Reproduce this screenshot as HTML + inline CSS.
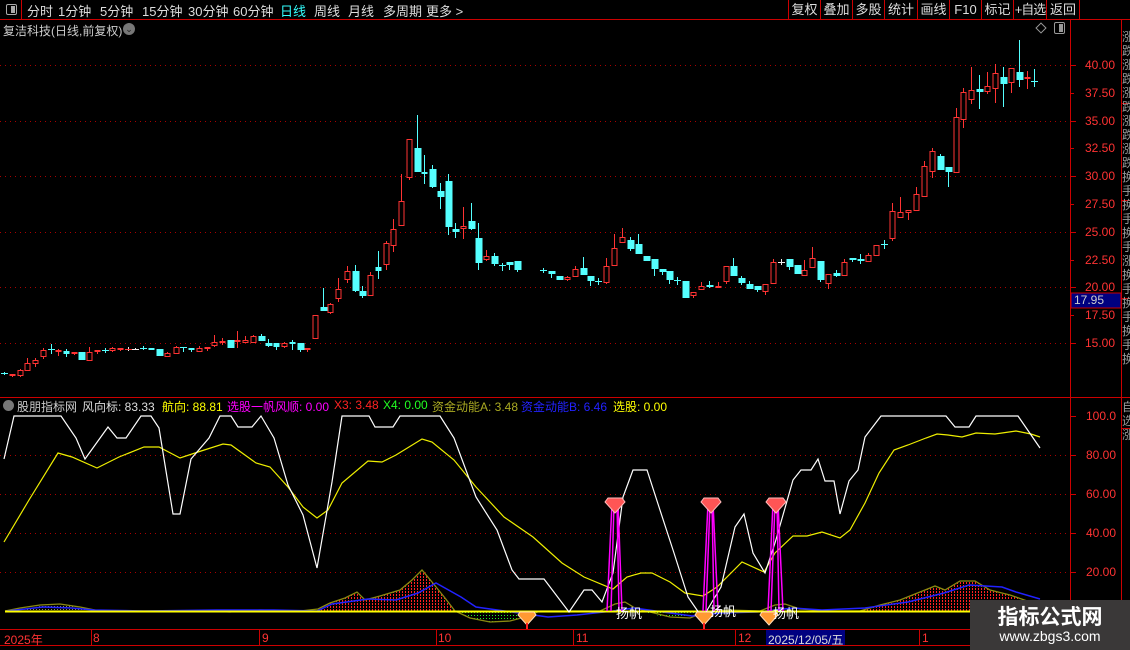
<!DOCTYPE html>
<html><head><meta charset="utf-8">
<style>
*{margin:0;padding:0;box-sizing:border-box}
body{width:1130px;height:650px;background:#000;overflow:hidden;position:relative;font-family:"Liberation Sans","Noto Sans CJK SC",sans-serif;color:#ccc}
.a{position:absolute;white-space:nowrap}
.tb{font-size:13px;top:1px;color:#ddd}
.btn{position:absolute;top:0;height:19px;border-left:1px solid #c00;font-size:13px;color:#ddd;text-align:center;line-height:19px;white-space:nowrap;overflow:hidden}
.pl{position:absolute;left:1085px;font-size:12px;color:#f33;font-family:"Liberation Sans",sans-serif}
.il{position:absolute;left:1086px;font-size:12px;color:#f33}
.hd{font-size:12px;top:398px}
</style></head><body>
<div class="a" style="left:0;top:0;width:1130px;height:20px;border-bottom:1px solid #c00"></div>
<div class="a" style="left:0;top:0;width:22px;height:19px;border-right:1px solid #c00"></div>
<div class="a" style="left:6px;top:4px;width:11px;height:11px;border:1px solid #aaa;border-radius:2px"><div style="position:absolute;right:1px;top:1px;width:4px;height:7px;background:#aaa"></div></div>
<div class="a tb" style="left:27px">分时</div>
<div class="a tb" style="left:58px">1分钟</div>
<div class="a tb" style="left:100px">5分钟</div>
<div class="a tb" style="left:142px">15分钟</div>
<div class="a tb" style="left:188px">30分钟</div>
<div class="a tb" style="left:233px">60分钟</div>
<div class="a tb" style="left:280px;color:#3ff">日线</div>
<div class="a tb" style="left:314px">周线</div>
<div class="a tb" style="left:348px">月线</div>
<div class="a tb" style="left:383px">多周期</div>
<div class="a tb" style="left:426px">更多 &gt;</div>
<div class="btn" style="left:788px;width:32px">复权</div>
<div class="btn" style="left:820px;width:32px">叠加</div>
<div class="btn" style="left:852px;width:32px">多股</div>
<div class="btn" style="left:884px;width:33px">统计</div>
<div class="btn" style="left:917px;width:32px">画线</div>
<div class="btn" style="left:949px;width:32px">F10</div>
<div class="btn" style="left:981px;width:32px">标记</div>
<div class="btn" style="left:1013px;width:33px;letter-spacing:-1px">+自选</div>
<div class="btn" style="left:1046px;width:33px">返回</div>
<div class="btn" style="left:1079px;width:51px"></div>
<div class="a" style="left:3px;top:22px;font-size:12px;color:#ccc">复洁科技(日线,前复权)</div>
<div class="a" style="left:123px;top:23px;width:12px;height:12px;border-radius:6px;background:#777;color:#222;font-size:9px;line-height:12px;text-align:center">⌄</div>
<div class="a" style="left:1037px;top:24px;width:8px;height:8px;border:1px solid #999;transform:rotate(45deg)"></div>
<div class="a" style="left:1054px;top:22px;width:11px;height:12px;border:1px solid #999;border-radius:2px"><div style="position:absolute;right:1px;top:1px;width:4px;height:8px;background:#999"></div></div>

<svg class="a" style="left:0;top:0" width="1130" height="650" viewBox="0 0 1130 650">
<defs>
<pattern id="rd" width="3" height="3" patternUnits="userSpaceOnUse"><rect width="1" height="2" fill="#f22"/></pattern>
<pattern id="gd" width="3" height="3" patternUnits="userSpaceOnUse"><rect width="1" height="1" fill="#2e2"/></pattern>
<pattern id="od" width="3" height="3" patternUnits="userSpaceOnUse"><rect width="1" height="1" fill="#886"/></pattern>
</defs>
<path d="M1070.5 20V645M1121.5 20V645M0 397.5H1130M0 629.5H1130M0 645.5H1130" stroke="#c00" fill="none"/>
<g stroke="#a00" stroke-dasharray="1 4" fill="none">
<path d="M0 65.5H1068M0 121.5H1068M0 176.5H1068M0 232.5H1068M0 287.5H1068M0 343.5H1068"/>
<path d="M0 455.5H1068M0 494.5H1068M0 533.5H1068M0 572.5H1068"/>
</g>
<g stroke="#c00"><path d="M1070 65.5h6M1070 93.5h4M1070 121.5h6M1070 148.5h4M1070 176.5h6M1070 204.5h4M1070 232.5h6M1070 260.5h4M1070 287.5h6M1070 315.5h4M1070 343.5h6M1070 416.5h6M1070 455.5h6M1070 494.5h6M1070 533.5h6M1070 572.5h6"/></g>
<path d="M1121 103.5H1130M1121 200.5H1130M1121 298.5H1130M1121 428.5H1130" stroke="#c00"/>

<g stroke-width="1" shape-rendering="crispEdges">
<path stroke="#f33" d="M12.5 374V377M20.5 369V377M27.5 358V371M35.5 358V367M43.5 348V359M58.5 349V356M74.5 352V355M89.5 347V361M97.5 350V354M112.5 347V352M120.5 348V351M167.5 352V357M176.5 346V354M199.5 346V352M207.5 347V351M214.5 335V347M222.5 338V345M237.5 331V348M245.5 336V343M253.5 335V343M284.5 342V348M307.5 348V352M315.5 315V339M330.5 303V314M338.5 278V302M347.5 266V283M370.5 272V296M386.5 241V270M393.5 219V252M401.5 174V226M409.5 139V180M463.5 207V239M486.5 250V261
M567.5 276V281M575.5 266V277M606.5 258V284M614.5 234V266M622.5 228V243M693.5 292V298M701.5 282V290M718.5 282V288M726.5 266V284M765.5 284V295M773.5 259V284M804.5 260V276M812.5 247V268M828.5 274V289M844.5 259V276M868.5 253V262M876.5 245V256M892.5 203V241M900.5 197V218M908.5 210V220M916.5 187V211M924.5 161V197M932.5 148V178M956.5 108V173M963.5 88V128M971.5 67V104M987.5 72V94M995.5 64V103M1011.5 68V93M1027.5 71V89"/>
<path stroke="#5ff" d="M4.5 372V375M51.5 344V354M66.5 349V357M81.5 352V360M105.5 348V353M143.5 346V350M151.5 348V350M159.5 349V356M183.5 347V352M191.5 348V352M230.5 340V348M261.5 334V341M268.5 339V347M276.5 343V350M292.5 340V350M300.5 343V352M323.5 288V311M355.5 265V292M362.5 286V298M378.5 251V279M417.5 115V172M424.5 155V184M432.5 165V188M440.5 183V209M448.5 174V235M455.5 223V238M471.5 203V230M478.5 223V270M494.5 253V266M502.5 263V271M509.5 262V270M517.5 261V272
M543.5 268V273M551.5 271V278M559.5 276V280M583.5 257V275M590.5 276V286M598.5 278V285M630.5 237V251M638.5 234V254M646.5 256V261M654.5 259V276M662.5 269V275M669.5 271V284M677.5 277V285M685.5 281V298M709.5 281V288M733.5 258V276M741.5 276V285M749.5 281V289M757.5 286V292M789.5 259V270M797.5 265V274M820.5 261V282M836.5 270V277M852.5 258V262M860.5 254V264M884.5 240V249M940.5 154V170M948.5 167V187M979.5 75V109M1003.5 67V107M1019.5 40V87M1034.5 69V87"/>
<path stroke="#eee" d="M128.5 347V351M135.5 348V350M781.5 259V265"/>
<path stroke="#f33" d="M125 349.5h7"/>
<path stroke="#eee" d="M132 349.5h7M778 262.5h7"/>
<path stroke="#5ff" d="M1 373.5h7M48 349.5h7M102 350.5h7M140 348.5h7M180 347.5h7M499 265.5h7M540 270.5h7M595 281.5h7M674 280.5h7M881 244.5h7M1031 81.5h7"/>
<g fill="#f33">
<rect x="9.5" y="374" width="6" height="2"/><rect x="55.5" y="350" width="6" height="2"/><rect x="71.5" y="352" width="6" height="2"/><rect x="94.5" y="350" width="6" height="2"/><rect x="117.5" y="348" width="6" height="2"/><rect x="204.5" y="347" width="6" height="2"/><rect x="219.5" y="341" width="6" height="2"/><rect x="234.5" y="340" width="6" height="2"/><rect x="304.5" y="348" width="6" height="2"/><rect x="715.5" y="286" width="6" height="2"/><rect x="1024.5" y="77" width="6" height="2"/>
</g>
<g fill="#000" stroke="#f33">
<rect x="18" y="370.5" width="5" height="5"/><rect x="25" y="363.5" width="5" height="7"/><rect x="33" y="360.5" width="5" height="3"/><rect x="41" y="350.5" width="5" height="6"/><rect x="87" y="352.5" width="5" height="8"/><rect x="110" y="348.5" width="5" height="2"/><rect x="165" y="353.5" width="5" height="3"/><rect x="174" y="347.5" width="5" height="6"/><rect x="197" y="348.5" width="5" height="3"/><rect x="212" y="342.5" width="5" height="3"/><rect x="243" y="340.5" width="5" height="2"/><rect x="251" y="336.5" width="5" height="6"/><rect x="282" y="343.5" width="5" height="3"/><rect x="313" y="315.5" width="5" height="23"/><rect x="328" y="304.5" width="5" height="8"/><rect x="336" y="289.5" width="5" height="9"/><rect x="345" y="271.5" width="5" height="8"/><rect x="368" y="275.5" width="5" height="20"/><rect x="384" y="243.5" width="5" height="21"/><rect x="391" y="229.5" width="5" height="16"/><rect x="399" y="201.5" width="5" height="24"/><rect x="407" y="139.5" width="5" height="38"/><rect x="461" y="226.5" width="5" height="2"/><rect x="484" y="256.5" width="5" height="3"/>
<rect x="565" y="277.5" width="5" height="2"/><rect x="573" y="269.5" width="5" height="7"/><rect x="604" y="266.5" width="5" height="16"/><rect x="612" y="248.5" width="5" height="17"/><rect x="620" y="237.5" width="5" height="5"/><rect x="691" y="292.5" width="5" height="3"/><rect x="699" y="286.5" width="5" height="3"/><rect x="724" y="266.5" width="5" height="15"/><rect x="763" y="284.5" width="5" height="7"/><rect x="771" y="262.5" width="5" height="21"/><rect x="802" y="270.5" width="5" height="5"/><rect x="810" y="258.5" width="5" height="9"/><rect x="826" y="274.5" width="5" height="9"/><rect x="842" y="262.5" width="5" height="13"/><rect x="866" y="255.5" width="5" height="6"/><rect x="874" y="245.5" width="5" height="10"/><rect x="890" y="211.5" width="5" height="27"/><rect x="898" y="212.5" width="5" height="5"/><rect x="906" y="210.5" width="5" height="2"/><rect x="914" y="194.5" width="5" height="16"/><rect x="922" y="166.5" width="5" height="30"/><rect x="930" y="151.5" width="5" height="20"/><rect x="954" y="117.5" width="5" height="55"/><rect x="961" y="92.5" width="5" height="27"/><rect x="969" y="90.5" width="5" height="9"/><rect x="985" y="86.5" width="5" height="5"/><rect x="993" y="73.5" width="5" height="15"/><rect x="1009" y="68.5" width="5" height="14"/>
</g>
<g fill="#5ff">
<rect x="63.5" y="351" width="6" height="3"/><rect x="78.5" y="352" width="7" height="8"/><rect x="148.5" y="348" width="6" height="2"/><rect x="156.5" y="349" width="7" height="7"/><rect x="188.5" y="348" width="6" height="2"/><rect x="227.5" y="340" width="7" height="8"/><rect x="258.5" y="336" width="7" height="5"/><rect x="265.5" y="343" width="7" height="3"/><rect x="273.5" y="343" width="6" height="4"/><rect x="289.5" y="342" width="6" height="2"/><rect x="297.5" y="343" width="7" height="7"/><rect x="320.5" y="307" width="7" height="4"/><rect x="352.5" y="271" width="7" height="20"/><rect x="359.5" y="291" width="7" height="5"/><rect x="375.5" y="267" width="6" height="4"/><rect x="414.5" y="148" width="7" height="24"/><rect x="421.5" y="172" width="6" height="2"/><rect x="429.5" y="169" width="7" height="18"/><rect x="437.5" y="191" width="7" height="6"/><rect x="445.5" y="181" width="7" height="46"/><rect x="452.5" y="229" width="7" height="3"/><rect x="468.5" y="221" width="7" height="8"/><rect x="475.5" y="238" width="7" height="25"/><rect x="491.5" y="256" width="7" height="8"/><rect x="506.5" y="262" width="7" height="3"/><rect x="514.5" y="261" width="7" height="9"/>
<rect x="548.5" y="271" width="7" height="3"/><rect x="556.5" y="276" width="7" height="4"/><rect x="580.5" y="268" width="7" height="7"/><rect x="587.5" y="276" width="7" height="5"/><rect x="627.5" y="240" width="7" height="9"/><rect x="635.5" y="244" width="7" height="10"/><rect x="643.5" y="256" width="7" height="5"/><rect x="651.5" y="259" width="7" height="10"/><rect x="659.5" y="269" width="7" height="3"/><rect x="666.5" y="271" width="7" height="9"/><rect x="682.5" y="281" width="7" height="17"/><rect x="706.5" y="285" width="7" height="2"/><rect x="730.5" y="266" width="7" height="10"/><rect x="738.5" y="278" width="7" height="5"/><rect x="746.5" y="284" width="7" height="5"/><rect x="754.5" y="286" width="7" height="4"/><rect x="786.5" y="259" width="7" height="8"/><rect x="794.5" y="265" width="7" height="9"/><rect x="817.5" y="261" width="7" height="19"/><rect x="833.5" y="273" width="7" height="3"/><rect x="849.5" y="258" width="7" height="2"/><rect x="857.5" y="259" width="7" height="2"/><rect x="937.5" y="156" width="7" height="14"/><rect x="945.5" y="167" width="7" height="5"/><rect x="976.5" y="89" width="7" height="3"/><rect x="1000.5" y="77" width="7" height="7"/><rect x="1016.5" y="72" width="7" height="8"/>
</g>
</g>

<rect x="1071" y="293" width="50" height="15" fill="#000080" stroke="#c00"/>

<polygon fill="url(#rd)" points="318,611 330,603 345,598 357,592 365,600 380,596 400,590 412,580 422,570 432,582 445,598 455,611"/>
<polygon fill="url(#rd)" points="860,611 880,605 900,600 920,592 935,586 945,590 960,581 975,581 990,590 1010,595 1030,602 1040,611"/>
<polygon fill="url(#od)" points="20,611 40,606 60,604 80,607 100,611"/>
<polygon fill="url(#gd)" points="455,611 470,618 490,622 510,621 525,617 540,611"/>
<polygon fill="url(#gd)" points="640,611 660,616 690,618 700,614 706,611"/>
<polyline fill="none" stroke="#8a8a10" stroke-width="1.3" points="5,611 20,608 40,605 60,604 80,607 100,611 150,611 200,611 230,612 260,610 300,611 318,609 330,603 345,598 357,592 365,600 380,596 400,590 412,580 422,570 432,582 445,598 455,611 470,618 490,622 510,621 525,617 540,611 560,611 600,611 615,604 625,602 635,608 650,612 670,617 690,618 700,614 712,611 730,610 760,611 775,605 785,604 800,609 830,611 860,611 880,605 900,600 920,592 935,586 945,590 960,581 975,581 990,590 1010,595 1030,602 1040,607"/>
<polyline fill="none" stroke="#22f" stroke-width="1.5" points="7,611 43,607 72,608 94,610 144,611 216,610 274,610 317,611 332,604 368,599 396,600 418,593 436,583 461,597 476,607 519,613 548,617 577,615 613,611 634,608 663,612 692,616 721,613 757,612 793,608 822,610 865,608 908,602 944,593 969,585 1002,587 1016,592 1040,599"/>
<path d="M5 611.5H1068" stroke="#ff0" stroke-width="2"/>
<polyline fill="none" stroke="#ee0" stroke-width="1.2" points="4,542 29,500 58,453 72,457 97,468 119,457 144,447 159,447 180,458 198,452 223,444 231,445 256,463 270,467 288,487 303,507 317,518 328,510 342,483 368,461 382,462 396,455 422,439 432,442 454,460 476,487 504,517 533,537 562,563 584,577 613,589 627,577 641,573 652,573 670,582 685,593 703,596 717,587 742,562 764,572 775,553 793,536 807,536 822,532 840,538 850,530 865,503 879,473 894,450 908,445 926,438 937,434 948,435 962,437 976,433 995,434 1016,431 1031,434 1040,437"/>
<polyline fill="none" stroke="#fff" stroke-width="1.2" points="4,459 14,416 61,416 76,438 85,459 108,427 117,438 126,438 141,416 151,416 159,428 173,514 180,514 191,459 209,438 220,416 231,416 238,427 252,427 261,416 274,438 288,485 303,515 317,568 332,482 342,416 369,416 375,427 393,427 400,416 440,416 454,438 476,497 497,530 512,570 519,579 544,579 569,612 584,590 592,590 602,602 613,573 623,497 633,470 647,470 659,507 674,553 688,597 699,613 706,612 721,587 735,527 744,514 753,553 765,573 775,543 793,480 801,470 811,470 818,459 825,481 834,481 840,514 849,481 858,470 865,437 881,416 946,416 955,427 969,427 976,416 1018,416 1029,432 1040,448"/>
<g stroke="#f0f" stroke-width="1.5" fill="none">
<path d="M607 611L612 503M611 611L614 503M617 503L619 611M618 503L622 611"/>
<path d="M703 611L708 503M706 611L710 503M712 503L714 611M713 503L718 611"/>
<path d="M768 611L773 503M771 611L775 503M777 503L779 611M778 503L783 611"/>
</g>
<g>
<path d="M608 498h14l3 4-10 11-10-11z" fill="#f55" stroke="#fbb"/>
<path d="M704 498h14l3 4-10 11-10-11z" fill="#f55" stroke="#fbb"/>
<path d="M769 498h14l3 4-10 11-10-11z" fill="#f55" stroke="#fbb"/>
<path d="M520 612h14l2 3-9 10-9-10z" fill="#f93" stroke="#fdb"/>
<path d="M697 612h14l2 3-9 10-9-10z" fill="#f93" stroke="#fdb"/>
<path d="M762 612h14l2 3-9 10-9-10z" fill="#f93" stroke="#fdb"/>
<path d="M527 623v6M704 623v6" stroke="#f22" stroke-width="2"/>
</g>
<path d="M91.5 630V645M259.5 630V645M436.5 630V645M573.5 630V645M735.5 630V645M919.5 630V645" stroke="#c00"/>
<rect x="766" y="630" width="79" height="15" fill="#000080"/>
</svg>

<div class="pl" style="top:58px">40.00</div>
<div class="pl" style="top:86px">37.50</div>
<div class="pl" style="top:114px">35.00</div>
<div class="pl" style="top:141px">32.50</div>
<div class="pl" style="top:169px">30.00</div>
<div class="pl" style="top:197px">27.50</div>
<div class="pl" style="top:225px">25.00</div>
<div class="pl" style="top:253px">22.50</div>
<div class="pl" style="top:280px">20.00</div>
<div class="pl" style="top:308px">17.50</div>
<div class="pl" style="top:336px">15.00</div>
<div class="a" style="left:1074px;top:293px;font-size:12px;color:#ccc">17.95</div>
<div class="il" style="top:409px">100.0</div>
<div class="il" style="top:448px">80.00</div>
<div class="il" style="top:487px">60.00</div>
<div class="il" style="top:526px">40.00</div>
<div class="il" style="top:565px">20.00</div>
<div class="a" style="left:1122px;top:30px;width:8px;font-size:12px;line-height:14px;color:#999;overflow:hidden;height:360px;white-space:normal;word-break:break-all">涨跌涨跌涨跌涨跌涨跌换手换手换手涨换手换手换手换</div>
<div class="a" style="left:1122px;top:400px;width:8px;font-size:12px;line-height:14px;color:#999;overflow:hidden;height:60px;white-space:normal">自选涨</div>

<div class="a" style="left:3px;top:400px;width:11px;height:11px;border-radius:6px;background:#777"></div>
<div class="a hd" style="left:17px;color:#ccc">股朋指标网</div>
<div class="a hd" style="left:82px;color:#ddd">风向标: 83.33</div>
<div class="a hd" style="left:162px;color:#ff0">航向: 88.81</div>
<div class="a hd" style="left:227px;color:#f0f">选股一帆风顺: 0.00</div>
<div class="a hd" style="left:334px;color:#f22">X3: 3.48</div>
<div class="a hd" style="left:383px;color:#2f2">X4: 0.00</div>
<div class="a hd" style="left:432px;color:#aa2">资金动能A: 3.48</div>
<div class="a hd" style="left:521px;color:#22f">资金动能B: 6.46</div>
<div class="a hd" style="left:613px;color:#ff0">选股: 0.00</div>
<div class="a" style="left:616px;top:603px;font-size:13px;color:#fff">扬帆</div>
<div class="a" style="left:710px;top:601px;font-size:13px;color:#fff">扬帆</div>
<div class="a" style="left:773px;top:603px;font-size:13px;color:#fff">扬帆</div>
<div class="a" style="left:4px;top:631px;font-size:12px;color:#f33">2025年</div>
<div class="a" style="left:93px;top:631px;font-size:12px;color:#f33">8</div>
<div class="a" style="left:262px;top:631px;font-size:12px;color:#f33">9</div>
<div class="a" style="left:438px;top:631px;font-size:12px;color:#f33">10</div>
<div class="a" style="left:576px;top:631px;font-size:12px;color:#f33">11</div>
<div class="a" style="left:738px;top:631px;font-size:12px;color:#f33">12</div>
<div class="a" style="left:768px;top:631px;font-size:12px;color:#ddd">2025/12/05/五</div>
<div class="a" style="left:922px;top:631px;font-size:12px;color:#f33">1</div>
<div class="a" style="left:970px;top:600px;width:160px;height:50px;background:#3a3838"></div>
<div class="a" style="left:970px;top:601px;width:160px;text-align:center;font-size:21px;font-weight:bold;color:#fff">指标公式网</div>
<div class="a" style="left:970px;top:628px;width:160px;text-align:center;font-size:14px;color:#fff">www.zbgs3.com</div>
</body></html>
